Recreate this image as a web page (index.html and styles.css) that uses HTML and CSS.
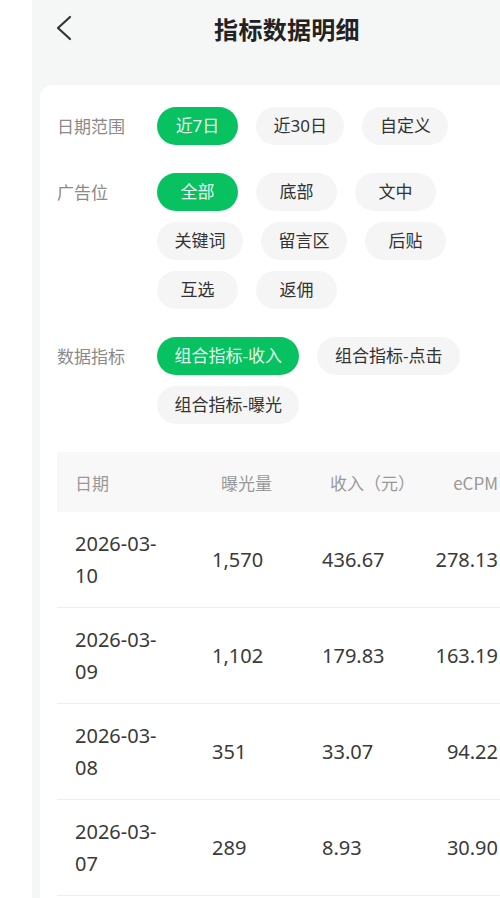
FILE: index.html
```html
<!DOCTYPE html>
<html lang="zh-CN">
<head>
<meta charset="utf-8">
<title>指标数据明细</title>
<link rel="stylesheet" href="styles.css">
</head>
<body>
<div class="page">
  <header class="nav">
    <div class="nav-left">
      <svg class="back" width="18" height="26" viewBox="0 0 18 26" aria-hidden="true">
        <path d="M15 2 L3 13 L15 24" fill="none" stroke="#333" stroke-width="2.2" stroke-linecap="round" stroke-linejoin="round"/>
      </svg>
    </div>
    <h1 class="title">指标数据明细</h1>
    <div class="nav-right"></div>
  </header>

  <main class="card">
    <section class="filter">
      <div class="label">日期范围</div>
      <div class="pills">
        <span class="pill active">近7日</span>
        <span class="pill">近30日</span>
        <span class="pill">自定义</span>
      </div>
    </section>

    <section class="filter">
      <div class="label">广告位</div>
      <div class="pills ad">
        <span class="pill active">全部</span>
        <span class="pill">底部</span>
        <span class="pill">文中</span>
        <span class="pill">关键词</span>
        <span class="pill">留言区</span>
        <span class="pill">后贴</span>
        <span class="pill">互选</span>
        <span class="pill">返佣</span>
      </div>
    </section>

    <section class="filter">
      <div class="label">数据指标</div>
      <div class="pills">
        <span class="pill active">组合指标-收入</span>
        <span class="pill">组合指标-点击</span>
        <span class="pill">组合指标-曝光</span>
      </div>
    </section>

    <section class="table">
      <div class="thead">
        <div class="c-date">日期</div>
        <div class="c-exp h-shift">曝光量</div>
        <div class="c-inc h-shift">收入（元）</div>
        <div class="c-ecpm">eCPM</div>
      </div>
      <div class="trow">
        <div class="c-date">2026-03-<wbr>10</div>
        <div class="c-exp">1,570</div>
        <div class="c-inc">436.67</div>
        <div class="c-ecpm">278.13</div>
      </div>
      <div class="trow">
        <div class="c-date">2026-03-<wbr>09</div>
        <div class="c-exp">1,102</div>
        <div class="c-inc">179.83</div>
        <div class="c-ecpm">163.19</div>
      </div>
      <div class="trow">
        <div class="c-date">2026-03-<wbr>08</div>
        <div class="c-exp">351</div>
        <div class="c-inc">33.07</div>
        <div class="c-ecpm">94.22</div>
      </div>
      <div class="trow">
        <div class="c-date">2026-03-<wbr>07</div>
        <div class="c-exp">289</div>
        <div class="c-inc">8.93</div>
        <div class="c-ecpm">30.90</div>
      </div>
    </section>
  </main>
</div>
</body>
</html>
```
FILE: styles.css
```css
html, body {
  margin: 0;
  padding: 0;
  background: #ffffff;
  overflow: hidden;
}

body {
  width: 500px;
  height: 898px;
  font-family: "Noto Sans", "Noto Sans CJK SC", sans-serif;
  color: #333333;
}

.page {
  margin-left: 32px;
  width: 510px;
  min-height: 898px;
  background: #f5f6f6;
  padding: 0 8px;
  box-sizing: border-box;
}

.nav {
  height: 56px;
  display: grid;
  grid-template-columns: 1fr auto 1fr;
  align-items: center;
}

.nav-left {
  display: flex;
  align-items: center;
  padding-left: 15px;
}

.back {
  display: block;
}

.title {
  margin: 0;
  font-size: 24px;
  font-weight: 700;
  color: #222222;
  letter-spacing: 0.3px;
  font-family: "Noto Sans CJK SC", sans-serif;
}

.card {
  margin-top: 29px;
  background: #ffffff;
  border-radius: 12px 12px 0 0;
  padding: 22px 0 0 17px;
  display: flex;
  flex-direction: column;
  gap: 28px;
  min-height: 800px;
}

.filter {
  display: grid;
  grid-template-columns: 100px 1fr;
  align-items: start;
}

.label {
  font-size: 17px;
  line-height: 38px;
  color: #8a8a8a;
  font-family: "Noto Sans CJK SC", sans-serif;
}

.pills {
  display: flex;
  flex-wrap: wrap;
  gap: 11px 18px;
}

.pills.ad {
  max-width: 300px;
}

.pill {
  height: 38px;
  min-width: 81px;
  box-sizing: border-box;
  padding: 0 17.5px;
  border-radius: 19px;
  background: #f5f5f5;
  font-size: 17px;
  line-height: 38px;
  text-align: center;
  color: #333333;
  font-family: "Noto Sans", "Noto Sans CJK SC", sans-serif;
}

.pill.active {
  background: #08c160;
  color: rgba(255, 255, 255, 0.92);
}

.table {
  display: flex;
  flex-direction: column;
}

.thead,
.trow {
  display: grid;
  grid-template-columns: 155px 110px 110px 1fr;
  align-items: center;
  padding-right: 36px;
}

.thead {
  height: 60px;
  background: #f8f8f8;
  font-size: 17px;
  color: #999999;
  font-family: "Noto Sans CJK SC", sans-serif;
}

.trow {
  height: 96px;
  box-sizing: border-box;
  border-bottom: 1px solid #eeeeee;
  font-size: 20px;
  color: #3a3a3a;
}

.c-date {
  padding-left: 18px;
}

.trow .c-date {
  line-height: 32px;
  max-width: 100px;
}

.h-shift {
  padding-left: 9px;
}

.thead .c-inc {
  padding-left: 8px;
}

.c-ecpm {
  text-align: right;
  white-space: nowrap;
}
```
